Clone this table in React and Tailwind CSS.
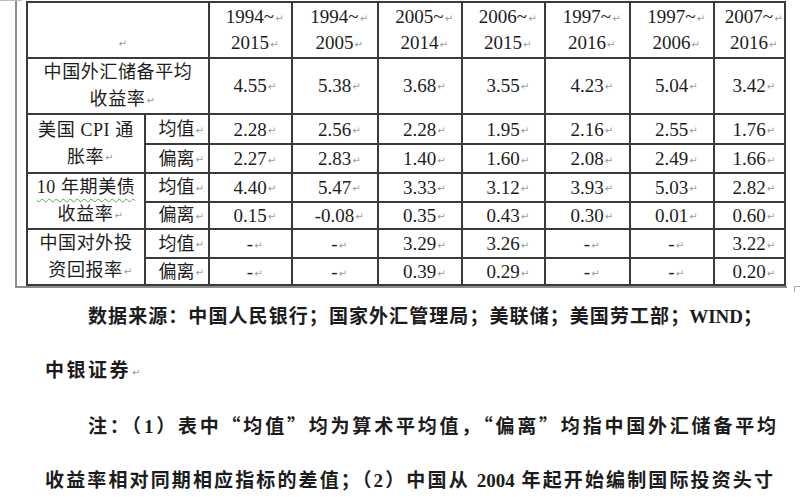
import React from "react";

const colWidths = [118, 64, 83, 86, 84, 83, 85, 84, 71];

const years = [
  ["1994~", "2015"],
  ["1994~", "2005"],
  ["2005~", "2014"],
  ["2006~", "2015"],
  ["1997~", "2016"],
  ["1997~", "2006"],
  ["2007~", "2016"],
];

const rows = [
  { label: ["美国 CPI 通", "胀率"], sub: "均值", h: "h-[30px]", values: ["2.28", "2.56", "2.28", "1.95", "2.16", "2.55", "1.76"] },
  { sub: "偏离", h: "h-[29px]", values: ["2.27", "2.83", "1.40", "1.60", "2.08", "2.49", "1.66"] },
  { label: ["10 年期美债", "收益率"], wavy: true, sub: "均值", h: "h-[28px]", values: ["4.40", "5.47", "3.33", "3.12", "3.93", "5.03", "2.82"] },
  { sub: "偏离", h: "h-[27px]", values: ["0.15", "-0.08", "0.35", "0.43", "0.30", "0.01", "0.60"] },
  { label: ["中国对外投", "资回报率"], sub: "均值", h: "h-[29px]", values: ["-", "-", "3.29", "3.26", "-", "-", "3.22"] },
  { sub: "偏离", h: "h-[27px]", values: ["-", "-", "0.39", "0.29", "-", "-", "0.20"] },
];

// Word paragraph mark, zero width so it doesn't shift centring
const Mark = () => (
  <span className="inline-block w-0 whitespace-nowrap pl-[1px] text-[10px] leading-none text-[#9a9a9a] font-['DejaVu_Sans',sans-serif] font-normal align-middle">
    ↵
  </span>
);

const cell = "border-2 border-[#3a3a3a] p-0 text-center align-middle";

export default function App() {
  return (
    <div className="relative w-[800px] h-[500px] overflow-hidden bg-white text-[#1c1c1c] font-['Liberation_Serif','Noto_Sans_CJK_SC',serif]">
      <div className="h-[1px] w-[22px] bg-[#bdbdbd]" />
      {/* table frame */}
      <div className="ml-[15px] w-[772px] border-l-2 border-b-2 border-[#8c8c8c] pl-[9px]">
        <table className="table-fixed border-collapse w-[758px]">
          <colgroup>
            {colWidths.map((w, i) => (
              <col key={i} style={{ width: w }} />
            ))}
          </colgroup>
          <tbody>
            <tr className="h-[56px]">
              <td colSpan={2} className={cell}>
                <div className="h-[25px]" />
                <div className="h-[25px] leading-[25px]">
                  <Mark />
                </div>
              </td>
              {years.map(([a, b], i) => (
                <td key={i} className={cell + " text-[19px] leading-[26px]"}>
                  <div>
                    {a}
                    <Mark />
                  </div>
                  <div>
                    {b}
                    <Mark />
                  </div>
                </td>
              ))}
            </tr>
            <tr className="h-[55px]">
              <td colSpan={2} className={cell + " text-[18px] leading-[27px] tracking-[0.6px]"}>
                <div>中国外汇储备平均</div>
                <div>
                  收益率
                  <Mark />
                </div>
              </td>
              {["4.55", "5.38", "3.68", "3.55", "4.23", "5.04", "3.42"].map((v, i) => (
                <td key={i} className={cell + " text-[19px]"}>
                  {v}
                  <Mark />
                </td>
              ))}
            </tr>
            {rows.map((r, ri) => (
              <tr key={ri} className={r.h}>
                {r.label && (
                  <td rowSpan={2} className={cell + " text-[18px] leading-[27px] tracking-[0.6px]"}>
                    <div>
                      {r.wavy ? (
                        <span className="underline decoration-wavy decoration-[#5aa84f] decoration-1 underline-offset-[5px]">
                          {r.label[0]}
                        </span>
                      ) : (
                        r.label[0]
                      )}
                    </div>
                    <div>
                      {r.label[1]}
                      <Mark />
                    </div>
                  </td>
                )}
                <td className={cell + " text-[18px] leading-none"}>
                  {r.sub}
                  <Mark />
                </td>
                {r.values.map((v, i) => (
                  <td key={i} className={cell + " text-[19px] leading-none"}>
                    {v}
                    <Mark />
                  </td>
                ))}
              </tr>
            ))}
          </tbody>
        </table>
      </div>

      <div className="absolute left-[794px] top-[286px] w-[6px] h-[6px] border-t border-l border-[#aaaaaa]" />

      {/* notes below the table */}
      <div className="mt-[2px] text-[19px] leading-[54px] font-bold">
        <p className="ml-[88px] w-[674px] text-justify [text-align-last:justify]">
          数据来源：中国人民银行；国家外汇管理局；美联储；美国劳工部；WIND；
        </p>
        <p className="ml-[45px] tracking-[2.5px]">
          中银证券
          <Mark />
        </p>
        <p className="ml-[88px] w-[688px] text-justify [text-align-last:justify]">
          注：（1）表中<span className="font-['Noto_Sans_CJK_SC']">“</span>均值<span className="font-['Noto_Sans_CJK_SC']">”</span>均为算术平均值，<span className="font-['Noto_Sans_CJK_SC']">“</span>偏离<span className="font-['Noto_Sans_CJK_SC']">”</span>均指中国外汇储备平均
        </p>
        <p className="ml-[45px] w-[728px] text-justify [text-align-last:justify]">
          收益率相对同期相应指标的差值；（2）中国从 2004 年起开始编制国际投资头寸
        </p>
      </div>
    </div>
  );
}
